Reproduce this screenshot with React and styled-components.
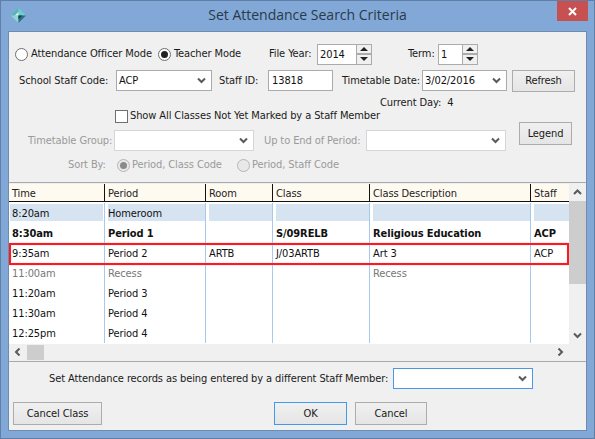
import React from "react";
import styled, { createGlobalStyle } from "styled-components";

const Global = createGlobalStyle`
  html, body { margin: 0; padding: 0; background: #7ea6d4; }
  body { font-family: "DejaVu Sans", "Liberation Sans", sans-serif; font-stretch: condensed; font-size: 11px; letter-spacing: -0.1px; color: #111; }
  * { box-sizing: border-box; }
`;

const Win = styled.div`
  width: 595px; height: 439px; background: #81a8d6; border: 1px solid #5f7fa6;
  display: flex; flex-direction: column; overflow: hidden;
`;
const TitleBar = styled.div`
  height: 30px; flex: none; display: flex; align-items: center; position: relative;
  padding-left: 10px; padding-bottom: 1px;
`;
const Title = styled.div`
  position: absolute; left: 20px; right: 0; top: 4px; text-align: center; letter-spacing: 0;
  font-family: "Open Sans", sans-serif; font-stretch: normal; font-size: 14px; color: #2b3a4a; line-height: 20px;
`;
const Close = styled.div`
  position: absolute; right: 6px; top: 0; width: 31px; height: 20px; background: #c75050;
  display: flex; align-items: center; justify-content: center;
`;
const Client = styled.div`
  margin: 0 7px 7px; flex: 1; background: #f0f0f0; border: 1px solid #6f8cae;
  display: flex; flex-direction: column; height: 401px;
`;
const Row = styled.div`
  display: flex; align-items: center; height: ${p => p.$h}px; margin-top: ${p => p.$mt || 0}px;
  padding-left: ${p => p.$pl || 0}px; flex: none;
`;
const Label = styled.span`
  white-space: nowrap; line-height: 14px; color: ${p => p.$off ? "#9a9a9a" : "#1a1a1a"};
  margin-left: ${p => p.$ml || 0}px; width: ${p => p.$w ? p.$w + "px" : "auto"};
  text-align: ${p => p.$right ? "right" : "left"}; flex: none;
`;
const RadioDot = styled.span`
  width: 13px; height: 13px; border-radius: 50%; flex: none;
  border: 1px solid ${p => p.$off ? "#b5b5b5" : "#6f6f6f"};
  background: ${p => p.$off ? "#e8e8e8" : "#fff"};
  margin-left: ${p => p.$ml || 0}px; margin-right: ${p => p.$mr ?? 3}px;
  display: flex; align-items: center; justify-content: center;
  &::after {
    content: ""; width: 7px; height: 7px; border-radius: 50%;
    background: ${p => p.$on ? (p.$off ? "#8a8a8a" : "#222") : "transparent"};
  }
`;
const Check = styled.span`
  width: 13px; height: 13px; background: #fff; border: 1px solid #6f6f6f; flex: none;
  margin-right: 2px;
`;
const Combo = styled.div`
  width: ${p => p.$w}px; height: 21px; flex: none; background: #fff; display: flex; align-items: center;
  margin-left: ${p => p.$ml || 0}px; padding: 0 2px;
  border: 1px solid ${p => p.$focus ? "#4a96e8" : p.$off ? "#d6d6d6" : "#ababab"};
  justify-content: space-between;
`;
const Chev = ({ dir = "down" }) => {
  const d = { down: "M1 1.5 L4.5 5 L8 1.5", up: "M1 5 L4.5 1.5 L8 5", left: "M5.5 .5 L2 4 L5.5 7.5", right: "M2.5 .5 L6 4 L2.5 7.5" }[dir];
  const side = dir === "left" || dir === "right";
  return (
    <svg width={side ? 8 : 9} height={side ? 8 : 7} viewBox={side ? "0 0 8 8" : "0 0 9 7"} style={{ flex: "none", marginRight: 3 }}>
      <path d={d} fill="none" stroke="#5a5a5a" strokeWidth="2" />
    </svg>
  );
};
const Spin = styled.div`
  width: ${p => p.$w}px; height: 21px; flex: none; background: #fff; border: 1px solid #ababab;
  margin-left: ${p => p.$ml || 0}px; padding-left: 2px; display: flex; align-items: center; justify-content: space-between;
`;
const SpinBtns = styled.div`
  width: 15px; height: 19px; flex: none; border-left: 1px solid #ababab;
  display: flex; flex-direction: column; background: #f0f0f0;
`;
const SpinBtn = styled.div`
  flex: 1; display: flex; align-items: center; justify-content: center;
  &:first-child { border-bottom: 2px solid #ababab; }
  &::after {
    content: ""; width: 0; height: 0; border-left: 4px solid transparent; border-right: 4px solid transparent;
    ${p => p.$up ? "border-bottom: 4px solid #222;" : "border-top: 4px solid #222;"}
  }
`;
const Input = styled.div`
  width: ${p => p.$w}px; height: 21px; flex: none; background: #fff; border: 1px solid #ababab; padding: 0 3px;
  display: flex; align-items: center; margin-left: ${p => p.$ml || 0}px;
`;
const Btn = styled.div`
  width: ${p => p.$w}px; height: ${p => p.$h || 23}px; flex: none; border: 1px solid ${p => p.$focus ? "#3f9ae8" : "#acacac"};
  background: linear-gradient(#f0f0f0, #e5e5e5); display: flex; align-items: center; justify-content: center;
  margin-left: ${p => p.$ml || 0}px; color: #1a1a1a; margin-top: ${p => p.$mt || 0}px;
`;
const Split = styled.div`
  display: flex; flex: none; height: 73px;
`;
const LeftCol = styled.div`
  width: 508px; flex: none; display: flex; flex-direction: column;
`;
const GridWrap = styled.div`
  flex: none; height: 180px; border-top: 1px solid #a9a9a9; border-bottom: 1px solid #a9a9a9;
  background: #f0f0f0; padding: 1px 1px 1px 0; display: grid;
  grid-template-columns: 560px 17px; grid-template-rows: 160px 16px;
`;
const Table = styled.div`
  background: #fff; display: flex; flex-direction: column; overflow: hidden; width: 560px; height: 160px;
`;
const cols = "95px 101px 67px 97px 161px 39px";
const Head = styled.div`
  display: grid; grid-template-columns: ${cols}; height: 18px; flex: none; background: #fffaf0; border-bottom: 1px solid #111;
`;
const HCell = styled.div`
  padding: 1px 0 0 3px; line-height: 17px; border-left: ${p => p.$first ? "none" : "1px solid #111"}; white-space: nowrap; overflow: hidden; color: #222;
`;
const Rows = styled.div`
  position: relative; flex: 1; padding-top: 1px; min-height: 0;
`;
const DataRow = styled.div`
  display: grid; grid-template-columns: ${cols}; height: 20px;
  font-weight: ${p => p.$b ? 700 : 400}; color: ${p => p.$muted ? "#777" : "#111"};
`;
const Cell = styled.div`
  position: relative; padding: 1px 0 0 3px; line-height: 19px; border-left: ${p => p.$first ? "none" : "1px solid #a9c8ee"};
  white-space: nowrap; overflow: hidden;
  &::before {
    content: ""; position: absolute; left: ${p => p.$first ? 1 : 3}px; right: ${p => p.$first ? 1 : 0}px; top: 1px; height: 17px;
    background: ${p => p.$blue ? "#d6e3f1" : "transparent"};
  }
  & > span { position: relative; }
`;
const Highlight = styled.div`
  position: absolute; left: 0; top: 41px; width: 560px; height: 22px; border: 2px solid #fb1a22;
  box-shadow: 0 0 1px #f88, inset 0 0 1px #f88; pointer-events: none;
`;
const VBar = styled.div`
  display: flex; flex-direction: column; align-items: center; width: 17px; height: 160px; background: #f0f0f0;
`;
const Arrow = styled.div`
  height: ${p => p.$h || 17}px; width: ${p => p.$w || "100%"}; flex: none; display: flex; align-items: center; justify-content: center;
  & svg { margin: 0 !important; }
`;
const VThumb = styled.div`
  width: 17px; height: 83px; background: #cdcdcd; flex: none;
`;
const Fill = styled.div`flex: 1;`;
const HBar = styled.div`
  display: flex; align-items: center; height: 16px; width: 560px; background: #f0f0f0;
`;
const HThumb = styled.div`
  width: 17px; height: 15px; background: #cdcdcd; flex: none;
`;
const Footer = styled.div`
  display: flex; align-items: center; margin-top: 6px; height: 21px; padding-left: 40px; flex: none;
`;
const Buttons = styled.div`
  display: flex; margin-top: 13px; padding-left: 4px; flex: none;
`;

const Logo = () => (
  <svg width="15" height="15" viewBox="0 0 16 16">
    <path d="M8 0 L8 8 L0 8 Z" fill="#4fb7b4" />
    <path d="M8 0 L16 8 L8 8 Z" fill="#6fcfcb" />
    <path d="M0 8 L8 8 L8 16 Z" fill="#8fd6d2" />
    <path d="M8 8 L16 8 L8 16 Z" fill="#2c6f86" />
    <path d="M8 4 L8 8 L4 8 Z" fill="#d8eef0" />
    <path d="M8 8 L12 8 L8 12 Z" fill="#123f55" />
  </svg>
);

const data = [
  { c: ["8:20am", "Homeroom", "", "", "", ""], blue: true },
  { c: ["8:30am", "Period 1", "", "S/09RELB", "Religious Education", "ACP"], b: true },
  { c: ["9:35am", "Period 2", "ARTB", "J/03ARTB", "Art 3", "ACP"] },
  { c: ["11:00am", "Recess", "", "", "Recess", ""], muted: true },
  { c: ["11:20am", "Period 3", "", "", "", ""] },
  { c: ["11:30am", "Period 4", "", "", "", ""] },
  { c: ["12:25pm", "Period 4", "", "", "", ""] },
];
const heads = ["Time", "Period", "Room", "Class", "Class Description", "Staff"];

export default function App() {
  return (
    <>
      <Global />
      <Win>
        <TitleBar>
          <Logo />
          <Title>Set Attendance Search Criteria</Title>
          <Close>
            <svg width="9" height="9" viewBox="0 0 9 9"><path d="M1 1 L8 8 M8 1 L1 8" stroke="#fff" strokeWidth="2" /></svg>
          </Close>
        </TitleBar>
        <Client>
          <Row $h={22} $mt={11} $pl={6}>
            <RadioDot />
            <Label $w={120}>Attendance Officer Mode</Label>
            <RadioDot $on $ml={7} />
            <Label $w={67}>Teacher Mode</Label>
            <Label $ml={28} $w={45}>File Year:</Label>
            <Spin $w={55} $ml={3}>2014<SpinBtns><SpinBtn $up /><SpinBtn /></SpinBtns></Spin>
            <Label $ml={36} $w={27}>Term:</Label>
            <Spin $w={40} $ml={3}>1<SpinBtns><SpinBtn $up /><SpinBtn /></SpinBtns></Spin>
          </Row>
          <Row $h={23} $mt={4} $pl={10}>
            <Label $w={92}>School Staff Code:</Label>
            <Combo $w={96} $ml={5}>ACP<Chev /></Combo>
            <Label $ml={7} $w={42}>Staff ID:</Label>
            <Input $w={65} $ml={7}>13818</Input>
            <Label $ml={9} $w={75}>Timetable Date:</Label>
            <Combo $w={85} $ml={5}>3/02/2016<Chev /></Combo>
            <Btn $w={63} $ml={5} $h={22}>Refresh</Btn>
          </Row>
          <Row $h={12} $mt={5} $pl={371}>
            <Label>Current Day:&nbsp; 4</Label>
          </Row>
          <Split>
            <LeftCol>
              <Row $h={14} $pl={106}>
                <Check />
                <Label>Show All Classes Not Yet Marked by a Staff Member</Label>
              </Row>
              <Row $h={21} $mt={7} $pl={19}>
                <Label $off $w={81} $right>Timetable Group:</Label>
                <Combo $off $w={140} $ml={5}><span /><Chev /></Combo>
                <Label $off $ml={10} $w={97}>Up to End of Period:</Label>
                <Combo $off $w={140} $ml={5}><span /><Chev /></Combo>
              </Row>
              <Row $h={18} $mt={5} $pl={59}>
                <Label $off $w={39}>Sort By:</Label>
                <RadioDot $off $on $ml={10} $mr={2} />
                <Label $off $w={92}>Period, Class Code</Label>
                <RadioDot $off $ml={13} $mr={2} />
                <Label $off>Period, Staff Code</Label>
              </Row>
            </LeftCol>
            <Btn $w={53} $ml={2} $mt={13}>Legend</Btn>
          </Split>
          <GridWrap>
            <Table>
              <Head>
                {heads.map((h, i) => <HCell key={h} $first={i === 0}>{h}</HCell>)}
              </Head>
              <Rows>
                {data.map(r => (
                  <DataRow key={r.c[0]} $b={r.b} $muted={r.muted}>
                    {r.c.map((t, i) => <Cell key={i} $first={i === 0} $blue={r.blue}><span>{t}</span></Cell>)}
                  </DataRow>
                ))}
                <Highlight />
              </Rows>
            </Table>
            <VBar>
              <Arrow><Chev dir="up" /></Arrow>
              <VThumb />
              <Fill />
              <Arrow><Chev /></Arrow>
            </VBar>
            <HBar>
              <Arrow $w="18px" $h={15}><Chev dir="left" /></Arrow>
              <HThumb />
              <Fill />
              <Arrow $w="18px" $h={15}><Chev dir="right" /></Arrow>
            </HBar>
          </GridWrap>
          <Footer>
            <Label $w={339}>Set Attendance records as being entered by a different Staff Member:</Label>
            <Combo $focus $w={140} $ml={5}><span /><Chev /></Combo>
          </Footer>
          <Buttons>
            <Btn $w={89}>Cancel Class</Btn>
            <Btn $w={73} $ml={172} $focus>OK</Btn>
            <Btn $w={72} $ml={8}>Cancel</Btn>
          </Buttons>
        </Client>
      </Win>
    </>
  );
}
